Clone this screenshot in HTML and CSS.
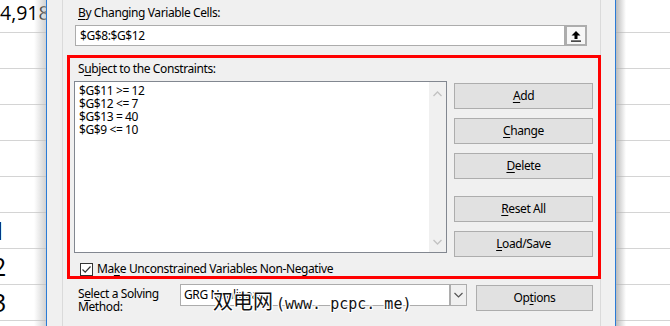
FILE: index.html
```html
<!DOCTYPE html>
<html>
<head>
<meta charset="utf-8">
<link rel="stylesheet" href="styles.css">
</head>
<body>
<div class="screen">
  <div class="sheet sheet-left">
    <div class="row first"><span class="num big">4,918</span></div>
    <div class="row"></div>
    <div class="row"></div>
    <div class="row"></div>
    <div class="row"></div>
    <div class="row"></div>
    <div class="row"><span class="num huge">1</span></div>
    <div class="row"><span class="num huge">2</span></div>
    <div class="row"><span class="num huge">3</span></div>
  </div>

  <div class="dialog">
    <div class="group">
      <div class="label by-label"><u>B</u>y Changing Variable Cells:</div>
      <div class="ref-row">
        <div class="ref-input">$G$8:$G$12</div>
        <div class="ref-btn">
          <svg width="12" height="12" viewBox="0 0 12 12"><path d="M6 1 L1.5 5.5 H4.5 V9 H7.5 V5.5 H10.5 Z" fill="#000"/><rect x="1" y="10.5" width="10" height="1.2" fill="#000"/></svg>
        </div>
      </div>

      <div class="redbox">
        <div class="label subj-label">S<u>u</u>bject to the Constraints:</div>
        <div class="cons">
          <div class="listbox">
            <div class="items">
              <div>$G$11 &gt;= 12</div>
              <div>$G$12 &lt;= 7</div>
              <div>$G$13 = 40</div>
              <div>$G$9 &lt;= 10</div>
            </div>
            <div class="vscroll">
              <svg width="9" height="6" viewBox="0 0 9 6"><path d="M0.5 5 L4.5 1 L8.5 5" fill="none" stroke="#c2c2c2" stroke-width="1.3"/></svg>
              <svg width="9" height="6" viewBox="0 0 9 6"><path d="M0.5 1 L4.5 5 L8.5 1" fill="none" stroke="#c2c2c2" stroke-width="1.3"/></svg>
            </div>
          </div>
          <div class="btns">
            <div class="btn"><u>A</u>dd</div>
            <div class="btn"><u>C</u>hange</div>
            <div class="btn"><u>D</u>elete</div>
            <div class="btn spaced"><u>R</u>eset All</div>
            <div class="btn"><u>L</u>oad/Save</div>
          </div>
        </div>
        <div class="check-row">
          <div class="checkbox">
            <svg width="11" height="11" viewBox="0 0 11 11"><path d="M1.5 5.5 L4.2 8.2 L9.5 2.5" fill="none" stroke="#333" stroke-width="1.2"/></svg>
          </div>
          <div class="label">Ma<u>k</u>e Unconstrained Variables Non-Negative</div>
        </div>
      </div>

      <div class="solve-row">
        <div class="label solve-label">S<u>e</u>lect a Solving<br>Method:</div>
        <div class="dropdown">
          <div class="dd-text">GRG Nonlinear</div>
          <div class="dd-arrow">
            <svg width="9" height="6" viewBox="0 0 9 6"><path d="M0.5 1 L4.5 5 L8.5 1" fill="none" stroke="#555" stroke-width="1.2"/></svg>
          </div>
        </div>
        <div class="btn options">Op<u>t</u>ions</div>
      </div>
    </div>
  </div>

  <div class="sheet sheet-right">
    <div class="row first"></div>
    <div class="row"></div>
    <div class="row"></div>
    <div class="row"></div>
    <div class="row"></div>
    <div class="row"></div>
    <div class="row"></div>
    <div class="row"></div>
    <div class="row"></div>
  </div>

  <div class="watermark"><span class="wm-cn">双电网</span><span class="wm-en">(www. pcpc. me)</span></div>
</div>
</body>
</html>
```

FILE: styles.css
```css
* { box-sizing: border-box; }
html, body { margin: 0; padding: 0; }
body {
  width: 670px;
  height: 326px;
  overflow: hidden;
  background: #fff;
  font-family: "Noto Sans", "Open Sans", sans-serif;
  font-size: 12px;
  letter-spacing: -0.4px;
  color: #000;
}
u { text-decoration: underline; text-underline-offset: 2px; text-decoration-thickness: 1px; }

.screen {
  position: relative;
  display: flex;
  width: 670px;
  height: 326px;
  overflow: hidden;
}

/* spreadsheet background */
.sheet {
  position: relative;
  display: flex;
  flex-direction: column;
  overflow: hidden;
}
.sheet-left { width: 46px; flex: none; }
.sheet-right { flex: 1; }
.row {
  flex: none;
  height: 36px;
  border-bottom: 1px solid #d4d4d4;
  display: flex;
  align-items: center;
  white-space: nowrap;
}
.row.first { height: 33px; align-items: flex-end; }
.num { font-family: "Open Sans", "Noto Sans", sans-serif; letter-spacing: 0; }
.big { font-size: 19.5px; line-height: 19px; margin-bottom: 10px; margin-left: 0; }
.huge { font-size: 25px; line-height: 25px; margin-left: -8px; }
.sheet-left::after {
  content: "";
  position: absolute;
  top: 0; bottom: 0; right: 0;
  width: 12px;
  background: linear-gradient(to right, rgba(200,200,200,0), rgba(190,190,190,0.7));
}
.sheet-right::before {
  content: "";
  position: absolute;
  top: 0; bottom: 0; left: 0;
  width: 10px;
  background: linear-gradient(to right, rgba(170,170,170,0.8), rgba(220,220,220,0));
}

/* dialog */
.dialog {
  width: 570px;
  flex: none;
  background: #f0f0f0;
  border-left: 1px solid #2b7bd6;
  border-right: 1px solid #2b7bd6;
  padding-left: 15px;
  padding-right: 14px;
}
.group {
  height: 100%;
  border-left: 1px solid #dadada;
  border-right: 1px solid #dadada;
  padding-top: 5px;
}
.label { line-height: 16px; white-space: nowrap; }
.by-label { margin-left: 15px; }

.ref-row {
  display: flex;
  margin-left: 12px;
  margin-top: 4px;
  height: 21px;
}
.ref-input {
  width: 490px;
  height: 21px;
  background: #fff;
  border: 1px solid #acacac;
  padding-left: 4px;
  line-height: 19px;
}
.ref-btn {
  width: 22px;
  height: 21px;
  border: 2px solid #adadad;
  background: #f7f7f7;
  display: flex;
  align-items: center;
  justify-content: center;
}

.redbox {
  margin-top: 9px;
  margin-left: 4px;
  width: 534px;
  height: 224px;
  border: 3px solid #ff0000;
}
.subj-label { margin-left: 8px; margin-top: 3px; }
.cons {
  display: flex;
  margin-top: 4px;
  margin-left: 4px;
}
.listbox {
  width: 373px;
  height: 172px;
  border: 1px solid #828790;
  background: #fff;
  display: flex;
}
.items {
  flex: 1;
  padding: 2px 4px;
  line-height: 13px;
}
.vscroll {
  width: 17px;
  background: #f0f0f0;
  display: flex;
  flex-direction: column;
  justify-content: space-between;
  align-items: center;
  padding: 9px 0 7px;
}
.btns {
  display: flex;
  flex-direction: column;
  margin-left: 7px;
  margin-top: 2px;
  gap: 9px;
}
.btn {
  width: 139px;
  height: 26px;
  background: #e1e1e1;
  border: 1px solid #adadad;
  display: flex;
  align-items: center;
  justify-content: center;
  line-height: 16px;
}
.btn.spaced { margin-top: 8px; }

.check-row {
  display: flex;
  align-items: center;
  margin-top: 4px;
  margin-left: 10px;
  gap: 4px;
}
.checkbox {
  width: 13px;
  height: 13px;
  border: 1px solid #333;
  background: #fff;
  display: flex;
  align-items: center;
  justify-content: center;
}

.solve-row {
  display: flex;
  align-items: flex-start;
  margin-top: 5px;
}
.solve-label {
  width: 117px;
  padding-left: 15px;
  line-height: 13px;
  margin-top: 3px;
}
.dropdown {
  width: 287px;
  height: 22px;
  display: flex;
  background: #fff;
  border: 1px solid #acacac;
}
.dd-text { flex: 1; padding-left: 3px; line-height: 20px; }
.dd-arrow {
  width: 17px;
  border-left: 2px solid #adadad;
  background: #f0f0f0;
  display: flex;
  align-items: center;
  justify-content: center;
}
.btn.options {
  width: 117px;
  margin-left: 9px;
  margin-top: 1px;
}

.watermark {
  position: absolute;
  left: 213px;
  top: 289px;
  display: flex;
  align-items: baseline;
  gap: 3px;
  line-height: 24px;
  letter-spacing: 0;
  color: #111;
  white-space: nowrap;
  text-shadow: 1px 0 #fff, -1px 0 #fff, 0 1px #fff, 0 -1px #fff, 1px 1px #fff, -1px -1px #fff, 1px -1px #fff, -1px 1px #fff;
}
.wm-cn { font-family: "Noto Sans CJK SC", sans-serif; font-size: 20px; }
.wm-en { font-family: "DejaVu Sans Mono", monospace; font-size: 15px; }
```
